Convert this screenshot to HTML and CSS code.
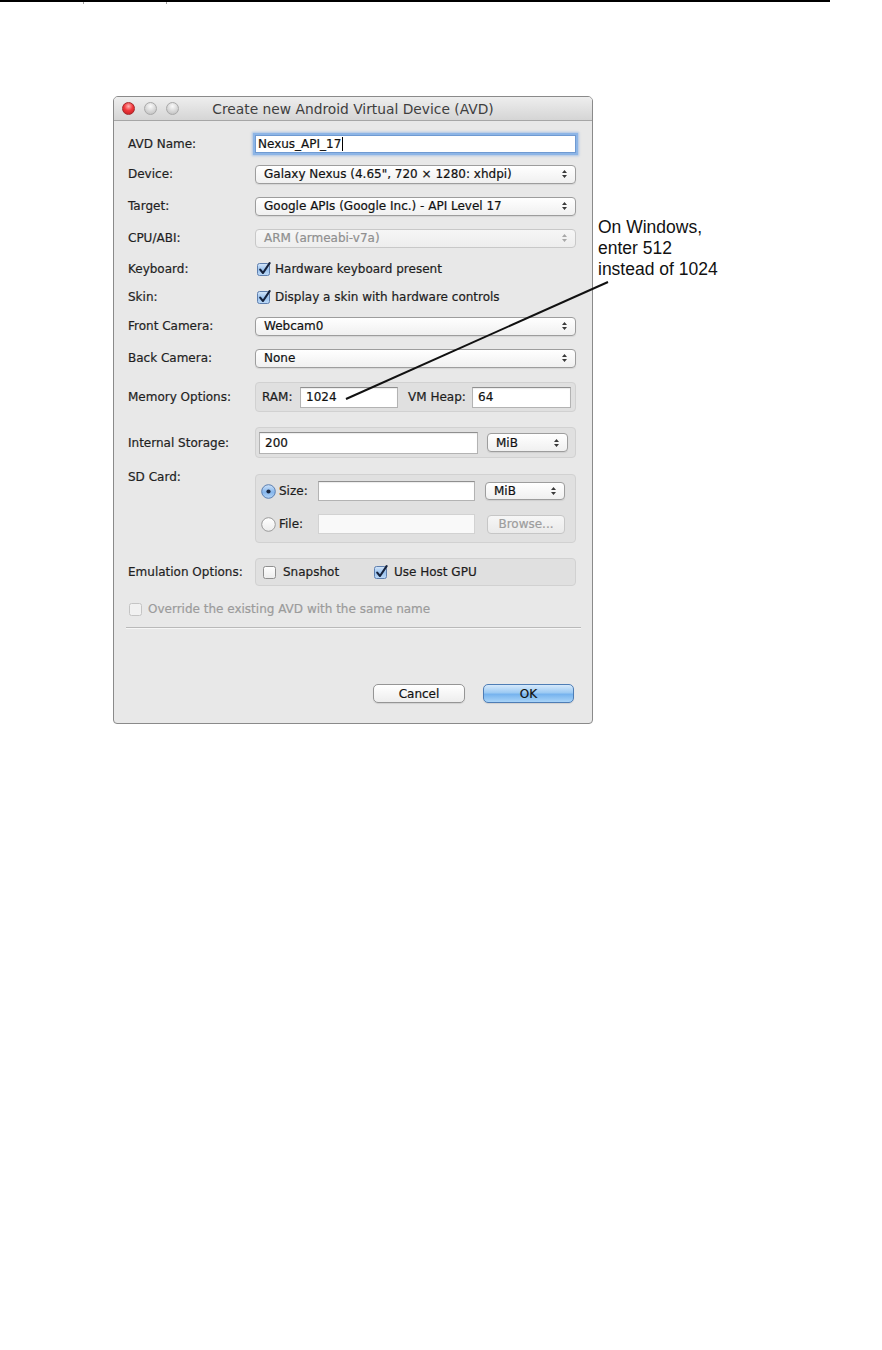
FILE: index.html
```html
<!DOCTYPE html>
<html>
<head>
<meta charset="utf-8">
<title>Create new Android Virtual Device (AVD)</title>
<link rel="stylesheet" href="styles.css">
</head>
<body>
<svg class="defs" width="0" height="0" aria-hidden="true">
  <defs>
    <linearGradient id="g-check" x1="0" y1="0" x2="0" y2="1">
      <stop offset="0" stop-color="#d6e7fa"/>
      <stop offset="0.5" stop-color="#9cc3ee"/>
      <stop offset="1" stop-color="#bcd9f7"/>
    </linearGradient>
    <linearGradient id="g-box" x1="0" y1="0" x2="0" y2="1">
      <stop offset="0" stop-color="#ffffff"/>
      <stop offset="1" stop-color="#ececec"/>
    </linearGradient>
    <linearGradient id="g-radio" x1="0" y1="0" x2="0" y2="1">
      <stop offset="0" stop-color="#cfe3f9"/>
      <stop offset="0.55" stop-color="#86b6ec"/>
      <stop offset="1" stop-color="#b5d5f6"/>
    </linearGradient>
  </defs>
</svg>
<div class="page">
  <div class="rule"><span class="rule-cell first"></span><span class="rule-cell"></span></div>

  <div class="dialog">
    <div class="titlebar">
      <div class="lights"><span class="light red"></span><span class="light"></span><span class="light"></span></div>
      <div class="title">Create new Android Virtual Device (AVD)</div>
      <div></div>
    </div>

    <div class="body">
      <div class="row row-name">
        <span class="lbl">AVD Name:</span>
        <div class="field field-focus">Nexus_API_17<span class="caret"></span></div>
      </div>
      <div class="row row-device">
        <span class="lbl">Device:</span>
        <div class="popup"><span>Galaxy Nexus (4.65", 720 × 1280: xhdpi)</span><svg class="arrows" viewBox="0 0 7 10"><path d="M1 4 L3.5 1 L6 4 Z M1 6 L3.5 9 L6 6 Z"/></svg></div>
      </div>
      <div class="row row-target">
        <span class="lbl">Target:</span>
        <div class="popup"><span>Google APIs (Google Inc.) - API Level 17</span><svg class="arrows" viewBox="0 0 7 10"><path d="M1 4 L3.5 1 L6 4 Z M1 6 L3.5 9 L6 6 Z"/></svg></div>
      </div>
      <div class="row row-cpu">
        <span class="lbl">CPU/ABI:</span>
        <div class="popup popup-disabled"><span>ARM (armeabi-v7a)</span><svg class="arrows" viewBox="0 0 7 10"><path d="M1 4 L3.5 1 L6 4 Z M1 6 L3.5 9 L6 6 Z"/></svg></div>
      </div>
      <div class="row row-kbd">
        <span class="lbl">Keyboard:</span>
        <div class="check-line">
          <svg class="check" viewBox="0 0 14 14"><rect x="0.5" y="1.5" width="12" height="12" rx="2" fill="url(#g-check)" stroke="#5f7fae"/><path d="M3.2 7.6 L6 11 L12.6 1.2" fill="none" stroke="#15223c" stroke-width="2.1" stroke-linecap="round" stroke-linejoin="round"/></svg>
          <span>Hardware keyboard present</span>
        </div>
      </div>
      <div class="row row-skin">
        <span class="lbl">Skin:</span>
        <div class="check-line">
          <svg class="check" viewBox="0 0 14 14"><rect x="0.5" y="1.5" width="12" height="12" rx="2" fill="url(#g-check)" stroke="#5f7fae"/><path d="M3.2 7.6 L6 11 L12.6 1.2" fill="none" stroke="#15223c" stroke-width="2.1" stroke-linecap="round" stroke-linejoin="round"/></svg>
          <span>Display a skin with hardware controls</span>
        </div>
      </div>
      <div class="row row-front">
        <span class="lbl">Front Camera:</span>
        <div class="popup"><span>Webcam0</span><svg class="arrows" viewBox="0 0 7 10"><path d="M1 4 L3.5 1 L6 4 Z M1 6 L3.5 9 L6 6 Z"/></svg></div>
      </div>
      <div class="row row-back">
        <span class="lbl">Back Camera:</span>
        <div class="popup"><span>None</span><svg class="arrows" viewBox="0 0 7 10"><path d="M1 4 L3.5 1 L6 4 Z M1 6 L3.5 9 L6 6 Z"/></svg></div>
      </div>

      <div class="row row-mem">
        <span class="lbl">Memory Options:</span>
        <div class="group group-mem">
          <span class="ram-lbl">RAM:</span>
          <div class="field field-ram">1024</div>
          <span class="heap-lbl">VM Heap:</span>
          <div class="field field-heap">64</div>
        </div>
      </div>

      <div class="row row-storage">
        <span class="lbl">Internal Storage:</span>
        <div class="group group-storage">
          <div class="field field-storage">200</div>
          <div class="popup popup-unit"><span>MiB</span><svg class="arrows" viewBox="0 0 7 10"><path d="M1 4 L3.5 1 L6 4 Z M1 6 L3.5 9 L6 6 Z"/></svg></div>
        </div>
      </div>

      <div class="row row-sd">
        <span class="lbl lbl-top">SD Card:</span>
        <div class="group group-sd">
          <div class="sd-line">
            <svg class="radio" viewBox="0 0 15 15"><circle cx="7.5" cy="7.5" r="6.8" fill="url(#g-radio)" stroke="#5a7eb0"/><circle cx="7.5" cy="7.5" r="2.1" fill="#1a2740"/></svg>
            <span class="sd-lbl">Size:</span>
            <div class="field field-sd"></div>
            <div class="popup popup-sd"><span>MiB</span><svg class="arrows" viewBox="0 0 7 10"><path d="M1 4 L3.5 1 L6 4 Z M1 6 L3.5 9 L6 6 Z"/></svg></div>
          </div>
          <div class="sd-line">
            <svg class="radio" viewBox="0 0 15 15"><circle cx="7.5" cy="7.5" r="6.8" fill="url(#g-box)" stroke="#9a9a9a"/></svg>
            <span class="sd-lbl">File:</span>
            <div class="field field-sd field-disabled"></div>
            <div class="btn btn-disabled btn-browse">Browse...</div>
          </div>
        </div>
      </div>

      <div class="row row-emu">
        <span class="lbl">Emulation Options:</span>
        <div class="group group-emu">
          <div class="emu-item emu-first">
            <svg class="check" viewBox="0 0 14 14"><rect x="0.5" y="1.5" width="12" height="12" rx="2" fill="url(#g-box)" stroke="#8f8f8f"/></svg>
            <span>Snapshot</span>
          </div>
          <div class="emu-item">
            <svg class="check" viewBox="0 0 14 14"><rect x="0.5" y="1.5" width="12" height="12" rx="2" fill="url(#g-check)" stroke="#5f7fae"/><path d="M3.2 7.6 L6 11 L12.6 1.2" fill="none" stroke="#15223c" stroke-width="2.1" stroke-linecap="round" stroke-linejoin="round"/></svg>
            <span>Use Host GPU</span>
          </div>
        </div>
      </div>

      <div class="override">
        <svg class="check" viewBox="0 0 14 14"><rect x="0.5" y="1.5" width="12" height="12" rx="2" fill="#f1f1f1" stroke="#c4c4c4"/></svg>
        <span>Override the existing AVD with the same name</span>
      </div>

      <div class="separator"></div>

      <div class="actions">
        <div class="btn btn-cancel">Cancel</div>
        <div class="btn btn-ok">OK</div>
      </div>
    </div>
  </div>

  <div class="note">On Windows,<br>enter 512<br>instead of 1024</div>
  <svg class="pointer" viewBox="0 0 882 1350" width="882" height="1350"><line x1="608" y1="282" x2="346" y2="399" stroke="#111" stroke-width="2"/></svg>
</div>
</body>
</html>
```

FILE: styles.css
```css
* { box-sizing: border-box; }

html, body {
  margin: 0;
  padding: 0;
  background: #ffffff;
}

body {
  font-family: "DejaVu Sans", "Liberation Sans", sans-serif;
  font-size: 12px;
  color: #1d1d1d;
}

.defs {
  display: block;
  width: 0;
  height: 0;
  overflow: hidden;
}

.page {
  position: relative;
  width: 882px;
  height: 1350px;
}

/* top rule */
.rule {
  display: flex;
  width: 830px;
  height: 4px;
  border-top: 2px solid #000;
}

.rule-cell {
  width: 83px;
  height: 2px;
  border-right: 1px solid #a0a0a0;
}

.rule-cell.first { width: 84px; }

/* dialog */
.dialog {
  margin: 92px 0 0 113px;
  width: 480px;
  height: 628px;
  border: 1px solid #8a8a8a;
  border-radius: 5px 5px 4px 4px;
  background: #e8e8e8;
  overflow: hidden;
  -webkit-text-stroke: 0.2px currentColor;
}

.titlebar {
  display: grid;
  grid-template-columns: 1fr auto 1fr;
  align-items: center;
  height: 24px;
  border-bottom: 1px solid #a6a6a6;
  background: linear-gradient(#eeeeee, #d5d5d5);
}

.lights {
  display: flex;
  gap: 9px;
  padding-left: 8px;
}

.light {
  width: 13px;
  height: 13px;
  border-radius: 50%;
  border: 1px solid #a9a9a9;
  background: radial-gradient(circle at 50% 30%, #fafafa 0%, #d6d6d6 55%, #b9b9b9 100%);
}

.light.red {
  border-color: #a5282b;
  background: radial-gradient(circle at 50% 30%, #ffb3b3 0%, #f2383c 45%, #bb1a1e 100%);
}

.title {
  font-size: 13.8px;
  color: #3e3e3e;
  white-space: nowrap;
  -webkit-text-stroke: 0;
}

.body {
  padding: 8px 16px 0 14px;
}

.row {
  display: grid;
  grid-template-columns: 127px 321px;
  align-items: center;
}

.row-name { height: 30px; }
.row-device { height: 30px; }
.row-target { height: 34px; }
.row-cpu { height: 30px; }
.row-kbd { height: 32px; }
.row-skin { height: 24px; }
.row-front { height: 34px; }
.row-back { height: 30px; }
.row-mem { margin-top: 9px; }
.row-storage { margin-top: 15px; }
.row-sd { margin-top: 12px; align-items: start; }
.row-emu { margin-top: 15px; }

.lbl {
  white-space: nowrap;
  color: #1f1f1f;
}

.lbl-top {
  line-height: 14px;
}

/* popups */
.popup {
  display: flex;
  align-items: center;
  justify-content: space-between;
  height: 19px;
  padding: 0 7px 0 8px;
  border: 1px solid #9d9d9d;
  border-radius: 4px;
  background: linear-gradient(#ffffff, #f0f0f0);
  box-shadow: 0 1px 1px rgba(0, 0, 0, 0.08);
  color: #111;
  white-space: nowrap;
}

.arrows {
  width: 7px;
  height: 10px;
  fill: #3a3a3a;
}

.popup-disabled {
  border-color: #c8c8c8;
  background: linear-gradient(#f6f6f6, #ededed);
  color: #8f8f8f;
  box-shadow: none;
}

.popup-disabled .arrows { fill: #a8a8a8; }

/* fields */
.field {
  display: flex;
  align-items: center;
  height: 21px;
  padding: 0 5px;
  border: 1px solid #b3b3b3;
  border-top-color: #8f8f8f;
  background: #ffffff;
  box-shadow: inset 0 1px 1px rgba(0, 0, 0, 0.08);
  color: #111;
}

.field-focus {
  height: 18px;
  padding-left: 2px;
  border: 1px solid #6f9ad2;
  box-shadow: 0 0 0 2px #8db5e6, 0 0 2px 3px rgba(120, 168, 228, 0.55);
}

.caret {
  display: inline-block;
  width: 1px;
  height: 14px;
  margin-left: 1px;
  background: #000;
}

.field-disabled {
  border-color: #d2d2d2;
  background: #f9f9f9;
  box-shadow: none;
}

/* groups */
.group {
  background: #e0e0e0;
  border: 1px solid #d1d1d1;
  border-radius: 4px;
}

.group-mem {
  display: flex;
  align-items: center;
  height: 30px;
  padding-left: 6px;
}

.ram-lbl { width: 38px; white-space: nowrap; }
.field-ram { width: 98px; }
.heap-lbl { width: 64px; margin-left: 10px; white-space: nowrap; }
.field-heap { width: 99px; }

.group-storage {
  display: flex;
  align-items: center;
  gap: 9px;
  height: 31px;
  padding-left: 3px;
}

.field-storage { width: 219px; height: 22px; }
.popup-unit { width: 81px; }

.group-sd {
  display: flex;
  flex-direction: column;
  gap: 13px;
  height: 69px;
  margin-top: 4px;
  padding: 6px 0 0 5px;
}

.sd-line {
  display: flex;
  align-items: center;
  height: 20px;
}

.radio {
  width: 15px;
  height: 15px;
  flex: none;
}

.sd-lbl {
  width: 42px;
  padding-left: 3px;
}

.field-sd { width: 157px; height: 20px; }
.popup-sd { width: 80px; margin-left: 10px; height: 18px; }

.group-emu {
  display: flex;
  align-items: center;
  height: 28px;
  padding-left: 7px;
}

.emu-item {
  display: flex;
  align-items: center;
  gap: 6px;
}

.emu-first { width: 111px; }

.check {
  width: 14px;
  height: 14px;
  flex: none;
}

.check-line {
  display: flex;
  align-items: center;
  gap: 4px;
  padding-left: 2px;
}

.override {
  display: flex;
  align-items: center;
  gap: 5px;
  height: 24px;
  margin-top: 11px;
  padding-left: 1px;
  color: #9b9b9b;
}

.separator {
  height: 1px;
  width: 455px;
  margin: 6px 0 0 -2px;
  background: #b9b9b9;
  box-shadow: 0 1px 0 #f6f6f6;
}

/* buttons */
.actions {
  display: flex;
  justify-content: flex-end;
  gap: 18px;
  margin: 56px 2px 0 0;
}

.btn {
  display: flex;
  align-items: center;
  justify-content: center;
  height: 19px;
  border-radius: 5px;
  border: 1px solid #959595;
  background: linear-gradient(#ffffff, #ededed);
  box-shadow: 0 1px 1px rgba(0, 0, 0, 0.1);
  color: #111;
}

.btn-cancel { width: 92px; }

.btn-ok {
  width: 91px;
  border-color: #4e7db5;
  background: linear-gradient(#d6e9fb 0%, #9ccaf3 45%, #76b3ee 55%, #a9d4f8 100%);
}

.btn-browse {
  width: 78px;
  height: 19px;
  margin-left: 12px;
  border-radius: 4px;
}

.btn-disabled {
  border-color: #c6c6c6;
  background: linear-gradient(#f6f6f6, #eaeaea);
  color: #9d9d9d;
  box-shadow: none;
}

/* annotation overlay */
.note {
  position: absolute;
  left: 598px;
  top: 217px;
  font-family: "Liberation Sans", Arial, sans-serif;
  font-size: 17.5px;
  line-height: 21px;
  color: #111;
  white-space: nowrap;
}

.pointer {
  position: absolute;
  left: 0;
  top: 0;
  pointer-events: none;
}
```
